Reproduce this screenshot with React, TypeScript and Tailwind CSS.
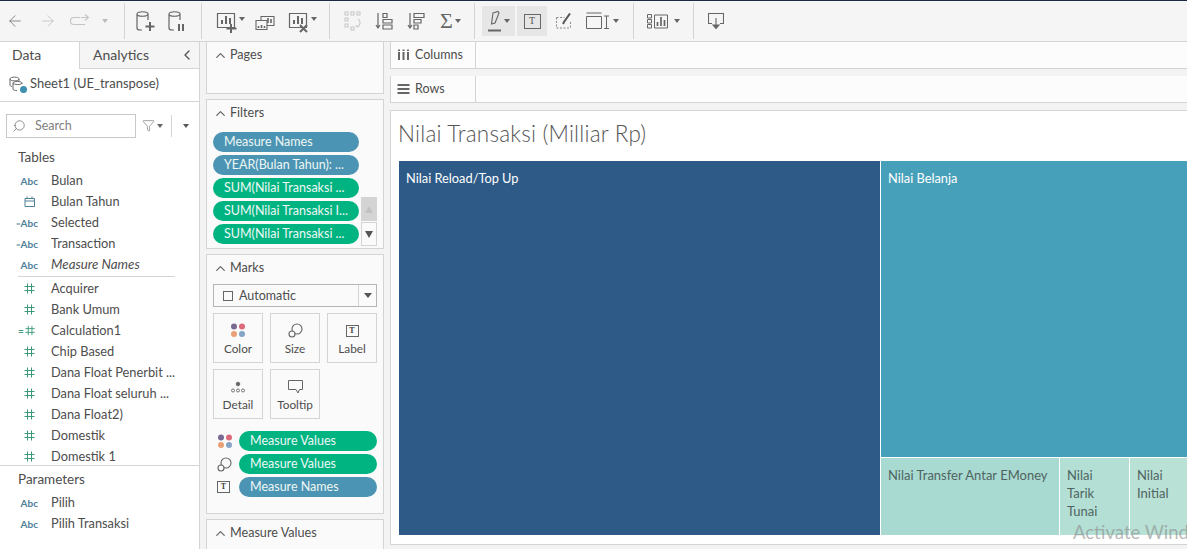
import React from 'react';
import { ArrowLeft, ArrowRight, ChevronLeft, ChevronUp, Search, Filter } from 'lucide-react';

const Caret = ({ className = 'border-t-[#666]' }: { className?: string }) => (
  <span className={`inline-block w-0 h-0 border-x-[3.5px] border-x-transparent border-t-[4px] ${className}`} />
);

const Sep = () => <div className="w-px h-9 bg-[#d4d4d4] shrink-0" />;

const Db = ({ badge }: { badge: 'plus' | 'pause' }) => (
  <svg width="22" height="24" viewBox="0 0 22 24" fill="none" stroke="#666" strokeWidth="1.2">
    <path d="M2 5v14c0 1 1 2 3 2h2M13 5v6M2 5c0-3 11-3 11 0s-11 3-11 0z" />
    {badge === 'plus' ? (
      <path d="M15 13v9M10.5 17.5h9" strokeWidth="2" />
    ) : (
      <path d="M12 15v7M16 15v7" strokeWidth="2" />
    )}
  </svg>
);

const Bars = ({ extra }: { extra: 'plus' | 'x' }) => (
  <svg width="26" height="24" viewBox="0 0 26 24" fill="none" stroke="#666" strokeWidth="1.2">
    <path d="M1.5 4.5h17v14h-17z" />
    <path d="M6 15v-4M10 15V7M14 15V9" strokeWidth="2" />
    {extra === 'plus' ? (
      <path d="M15 15v9M10.5 19.5h10" strokeWidth="2" />
    ) : (
      <path d="M12 16l7 7M19 16l-7 7" strokeWidth="2" />
    )}
  </svg>
);

const Toolbar = () => (
  <div className="h-[41px] flex items-center bg-[#f5f5f5] border-b border-[#d4d4d4] shrink-0">
    <div className="w-[24px] flex justify-end"><ArrowLeft size={18} strokeWidth={1} color="#666" /></div>
    <div className="w-[33px] flex justify-end"><ArrowRight size={18} strokeWidth={1} color="#bbb" /></div>
    <div className="w-[33px] flex justify-end">
      <svg width="20" height="14" viewBox="0 0 20 14" fill="none" stroke="#c4c4c4" strokeWidth="1.1">
        <path d="M10 3.5H4a3 3 0 0 0 0 7h11" />
        <path d="M11 3.5h7M15 0.5l3.5 3-3.5 3" />
      </svg>
    </div>
    <div className="w-[18px] flex justify-end"><Caret className="border-t-[#bbb]" /></div>
    <div className="w-[16px]" />
    <Sep />
    <div className="w-[10px]" />
    <Db badge="plus" />
    <div className="w-[10px]" />
    <Db badge="pause" />
    <div className="w-[12px]" />
    <Sep />
    <div className="w-[14px]" />
    <Bars extra="plus" />
    <span className="ml-[-3px] -mt-1 flex"><Caret /></span>
    <div className="w-[10px]" />
    <svg width="20" height="20" viewBox="0 0 20 20" fill="none" stroke="#666" strokeWidth="1.1">
      <path d="M6 5.5h13v9h-13z" />
      <path d="M10 12V9M13 12V7M16 12V8" strokeWidth="1.6" />
      <path d="M1 9.5h11v9H1z" fill="#f5f5f5" />
      <path d="M3.5 17v-2M6.5 17v-3M9.5 17v-2" strokeWidth="1.6" />
    </svg>
    <div className="w-[13px]" />
    <Bars extra="x" />
    <span className="ml-[-3px] -mt-1 flex"><Caret /></span>
    <div className="w-[12px]" />
    <Sep />
    <div className="w-[14px]" />
    <svg width="20" height="20" viewBox="0 0 20 20" fill="none" stroke="#c8c8c8" strokeWidth="1.1">
      <path d="M1 1h3v3H1zM7 1h3v3H7zM13 1h3v3h-3zM1 7h3v3H1zM1 13h3v3H1zM7 16h3v3H7z" />
      <path d="M14 8c3 2 3 6-1 8l-1-2" />
    </svg>
    <div className="w-[11px]" />
    <svg width="18" height="20" viewBox="0 0 18 20" fill="none" stroke="#666" strokeWidth="1.2">
      <path d="M3 2v15M1 14l2 3 2-3M8 2.5h4v4H8zM8 8.5h9v3.5H8zM8 14h9v4H8z" />
    </svg>
    <div className="w-[14px]" />
    <svg width="18" height="20" viewBox="0 0 18 20" fill="none" stroke="#666" strokeWidth="1.2">
      <path d="M3 2v15M1 14l2 3 2-3M7 2.5h10v4H7zM7 8.5h7v3.5H7zM7 14h4v4H7z" />
    </svg>
    <div className="w-[12px]" />
    <span className="w-[26px] ml-[3px] flex items-center text-[#666] text-[22px] leading-none font-['Liberation_Serif',serif]">
      Σ<span className="ml-[2px] flex"><Caret /></span>
    </span>
    <div className="w-[8px]" />
    <Sep />
    <div className="w-[7px]" />
    <div className="w-[33px] h-[30px] bg-[#e6e6e6] flex items-center justify-center gap-[1px]">
      <svg width="16" height="22" viewBox="0 0 16 22" fill="none" stroke="#666" strokeWidth="1.1">
        <path d="M6 3l5-1.500 1 1.500-4 10-3.500 1z" />
        <path d="M1 20.500h13" strokeWidth="2" />
      </svg>
      <Caret />
    </div>
    <div className="w-[2px]" />
    <div className="w-[30px] h-[30px] bg-[#e6e6e6] flex items-center justify-center">
      <span className="w-[17px] h-[15px] border border-[#666] flex items-center justify-center text-[10px] leading-none text-[#555] font-['Liberation_Serif',serif]">T</span>
    </div>
    <div className="w-[9px]" />
    <svg width="16" height="16" viewBox="0 0 16 16" fill="none" stroke="#888" strokeWidth="1">
      <path d="M.5 4.500h8M.5 15h14M.5 4.500V15M14.500 9v6" strokeDasharray="2 1.500" />
      <path d="M14 .5L8 9l-1 2" stroke="#555" strokeWidth="2" />
    </svg>
    <div className="w-[14px]" />
    <svg width="24" height="18" viewBox="0 0 24 18" fill="none" stroke="#666" strokeWidth="1">
      <path d="M.5 1h15M.5 4.500h15v12H.5zM18 4h5M20.500 4v12.500M18 16.500h5" />
    </svg>
    <span className="ml-[3px] flex"><Caret /></span>
    <div className="w-[14px]" />
    <Sep />
    <div className="w-[13px]" />
    <svg width="21" height="15" viewBox="0 0 21 15" fill="none" stroke="#666" strokeWidth="1">
      <path d="M.5 .5h4v3.500h-4zM.5 5.500h4V9h-4zM.5 10.500h4V14h-4zM7.500 1h13v13h-13z" />
      <path d="M10.500 12V8M14 12V3M17.500 12V6" strokeWidth="1.700" />
    </svg>
    <span className="ml-[6px] flex"><Caret /></span>
    <div className="w-[13px]" />
    <Sep />
    <div className="w-[14px]" />
    <svg width="16" height="16" viewBox="0 0 16 16" fill="none" stroke="#666" strokeWidth="1.1">
      <path d="M4 10.500H.5V.5h15v10H12" />
      <path d="M8 5v8" />
      <path d="M5 12h6l-3 3.500z" fill="#666" />
    </svg>
  </div>
);

const FieldIcon = ({ kind }: { kind: string }) => {
  if (kind === 'abc' || kind === 'calcAbc') {
    return (
      <span className="w-[20px] flex justify-end items-center text-[10px] font-bold leading-none text-[#4f8099]">
        {kind === 'calcAbc' && <span className="text-[8px]">=</span>}
        Abc
      </span>
    );
  }
  if (kind === 'date') {
    return (
      <span className="w-[20px] flex justify-end pr-[3px]">
        <svg width="11" height="11" viewBox="0 0 11 11" fill="none" stroke="#4f8099" strokeWidth="1">
          <path d="M1 2.500h9.500V10.500H1zM1 5h9.500M3 .5v2M8 .5v2" />
        </svg>
      </span>
    );
  }
  return (
    <span className="w-[20px] flex justify-end items-center pr-[3px]">
      {kind === 'calcNum' && <span className="text-[10px] font-bold leading-none text-[#3c9a78] mr-[1px]">=</span>}
      <svg width="11" height="11" viewBox="0 0 11 11" fill="none" stroke="#3c9a78" strokeWidth="1">
        <path d="M3.500 .5v10M7.500 .5v10M.5 3.500h10M.5 7.500h10" />
      </svg>
    </span>
  );
};

const Field = ({ kind, name, italic }: { kind: string; name: string; italic?: boolean }) => (
  <div className="h-[21px] flex items-center pl-[18px] shrink-0">
    <FieldIcon kind={kind} />
    <span className={`ml-[13px] text-[#4d4d4d] whitespace-nowrap ${italic ? 'italic text-[13.300px]' : 'text-[12.800px]'}`}>{name}</span>
  </div>
);

const DataPanel = () => (
  <div className="w-[200px] shrink-0 bg-white border-r border-[#d4d4d4] flex flex-col overflow-hidden">
    <div className="h-[27px] flex shrink-0">
      <div className="w-[80px] border-r border-[#d4d4d4] pl-[12px] pb-[2px] flex items-center text-[14px] text-[#4d4d4d]">Data</div>
      <div className="flex-1 bg-[#f5f5f5] border-b border-[#d4d4d4] pl-[13px] pr-[4px] pb-[1px] flex items-center justify-between text-[14px] text-[#4d4d4d]">
        Analytics
        <ChevronLeft size={16} strokeWidth={2} color="#555" />
      </div>
    </div>
    <div className="h-[33px] flex items-center pl-[9px] pb-[2px] border-b border-[#d4d4d4] shrink-0">
      <span className="relative w-[16px] h-[16px]">
        <svg width="16" height="16" viewBox="0 0 16 16" fill="none" stroke="#666" strokeWidth="1">
          <path d="M1 3c0-2.500 9-2.500 9 0s-9 2.500-9 0zM1 3v6c0 1 1 1.500 2 1.500M10 3v2" />
          <path d="M4 7c0-2 9-2 9 0s-9 2-9 0zM4 7v6c0 1 2 1.500 4 1.500M13 7v1" />
        </svg>
        <span className="absolute right-[-2px] bottom-[-1px] w-[7px] h-[7px] rounded-full bg-[#3f8fb0]" />
      </span>
      <span className="ml-[5px] text-[13px] text-[#4d4d4d]">Sheet1 (UE_transpose)</span>
    </div>
    <div className="h-[50px] flex items-center pl-[6px] pb-[3px] shrink-0">
      <div className="w-[130px] h-[24px] border border-[#c8c8c8] flex items-center pl-[5px]">
        <Search size={14} strokeWidth={1.200} color="#666" className="-scale-x-100" />
        <span className="ml-[9px] mt-[2px] text-[12.500px] text-[#808080]">Search</span>
      </div>
      <Filter size={13} strokeWidth={1.100} color="#666" className="ml-[6px]" />
      <span className="ml-[2px] flex"><Caret /></span>
      <div className="w-px h-[22px] bg-[#d4d4d4] ml-[8px]" />
      <span className="ml-[11px] flex"><Caret className="border-t-[#555]" /></span>
    </div>
    <div className="pl-[18px] text-[13.500px] text-[#4d4d4d] h-[19px] -mt-[4px] mb-[3px] leading-[19px] shrink-0">Tables</div>
    <Field kind="abc" name="Bulan" />
    <Field kind="date" name="Bulan Tahun" />
    <Field kind="calcAbc" name="Selected" />
    <Field kind="calcAbc" name="Transaction" />
    <Field kind="abc" name="Measure Names" italic />
    <div className="h-px bg-[#d4d4d4] ml-[18px] mr-[24px] my-[1px] shrink-0" />
    <Field kind="num" name="Acquirer" />
    <Field kind="num" name="Bank Umum" />
    <Field kind="calcNum" name="Calculation1" />
    <Field kind="num" name="Chip Based" />
    <Field kind="num" name="Dana Float Penerbit ..." />
    <Field kind="num" name="Dana Float seluruh ..." />
    <Field kind="num" name="Dana Float2)" />
    <Field kind="num" name="Domestik" />
    <Field kind="num" name="Domestik 1" />
    <div className="h-px bg-[#d4d4d4] -mt-[2px] shrink-0" />
    <div className="pl-[18px] text-[13.500px] text-[#4d4d4d] h-[19px] mt-[4px] mb-[3px] leading-[19px] shrink-0">Parameters</div>
    <Field kind="abc" name="Pilih" />
    <Field kind="abc" name="Pilih Transaksi" />
  </div>
);

const Card = ({ title, className, children }: { title: string; className: string; children?: React.ReactNode }) => (
  <div className={`bg-[#fafafa] border border-[#d4d4d4] shrink-0 ${className}`}>
    <div className="h-[26px] flex items-center pl-[6px]">
      <ChevronUp size={15} strokeWidth={2} color="#666" />
      <span className="ml-[2px] text-[12.600px] text-[#4d4d4d]">{title}</span>
    </div>
    {children}
  </div>
);

const Pill = ({ label, color, className = 'w-[146px]' }: { label: string; color: string; className?: string }) => (
  <div className={`h-[20px] rounded-full flex items-center pl-[11px] pt-[1px] text-[12.500px] text-[#eef7f5] whitespace-nowrap ${color} ${className}`}>
    {label}
  </div>
);

const Dots = () => (
  <svg width="16" height="15" viewBox="0 0 16 15">
    <circle cx="4" cy="3.500" r="3" fill="#7a6a93" />
    <circle cx="12" cy="3.500" r="3" fill="#dd6a7a" />
    <circle cx="4" cy="11" r="3" fill="#e9a077" />
    <circle cx="12" cy="11" r="3" fill="#84a3c7" />
  </svg>
);

const SizeIcon = () => (
  <svg width="15" height="15" viewBox="0 0 15 15" fill="none" stroke="#666" strokeWidth="1.100">
    <circle cx="9" cy="6" r="5" />
    <circle cx="4" cy="11" r="3" fill="#fafafa" />
  </svg>
);

const TBox = () => (
  <span className="w-[13px] h-[12px] border border-[#666] flex items-center justify-center text-[8px] leading-none text-[#444] font-['Liberation_Serif',serif] font-bold">T</span>
);

const MarkBtn = ({ label, children }: { label: string; children: React.ReactNode }) => (
  <div className="w-[50px] h-[50px] border border-[#d4d4d4] flex flex-col items-center pt-[9px]">
    <div className="h-[15px] flex items-center justify-center">{children}</div>
    <span className="mt-[2px] text-[11.800px] leading-[18px] text-[#4d4d4d]">{label}</span>
  </div>
);

const ShelfPanel = () => (
  <div className="w-[190px] shrink-0 pl-[6px] flex flex-col gap-[5px] overflow-hidden">
    <Card title="Pages" className="w-[178px] h-[52px] border-t-0" />
    <Card title="Filters" className="w-[178px] h-[150px]">
      <div className="flex pl-[6px] pt-[6px]">
        <div className="flex flex-col gap-[3px]">
          <Pill label="Measure Names" color="bg-[#4c94b3]" />
          <Pill label="YEAR(Bulan Tahun): ..." color="bg-[#4c94b3]" />
          <Pill label="SUM(Nilai Transaksi ..." color="bg-[#00b482]" />
          <Pill label="SUM(Nilai Transaksi I..." color="bg-[#00b482]" />
          <Pill label="SUM(Nilai Transaksi ..." color="bg-[#00b482]" />
        </div>
        <div className="ml-[2px] mt-[65px] w-[16px] flex flex-col gap-[1px]">
          <div className="h-[24px] bg-[#d4d4d4] flex items-center justify-center">
            <span className="w-0 h-0 border-x-[4px] border-x-transparent border-b-[7px] border-b-[#c2c2c2]" />
          </div>
          <div className="h-[24px] border border-[#d4d4d4] flex items-center justify-center">
            <span className="w-0 h-0 border-x-[4px] border-x-transparent border-t-[7px] border-t-[#555]" />
          </div>
        </div>
      </div>
    </Card>
    <Card title="Marks" className="w-[178px] h-[260px]">
      <div className="px-[6px] pt-[3px]">
        <div className="h-[23px] w-[164px] border border-[#b5b5b5] flex items-center pl-[9px]">
          <span className="w-[10px] h-[10px] border border-[#666]" />
          <span className="ml-[6px] mt-px flex-1 text-[12.500px] text-[#4d4d4d]">Automatic</span>
          <span className="w-[18px] h-full border-l border-[#d4d4d4] flex items-center justify-center">
            <span className="w-0 h-0 border-x-[4px] border-x-transparent border-t-[5px] border-t-[#555]" />
          </span>
        </div>
        <div className="grid grid-cols-[50px_50px_50px] gap-x-[7px] gap-y-[6px] mt-[6px]">
          <MarkBtn label="Color"><Dots /></MarkBtn>
          <MarkBtn label="Size"><SizeIcon /></MarkBtn>
          <MarkBtn label="Label"><TBox /></MarkBtn>
          <MarkBtn label="Detail">
            <svg width="14" height="12" viewBox="0 0 14 12" fill="none" stroke="#666" strokeWidth="0.900">
              <circle cx="7" cy="3" r="1.800" fill="#666" />
              <circle cx="2" cy="9.500" r="1.500" />
              <circle cx="7" cy="9.500" r="1.500" />
              <circle cx="12" cy="9.500" r="1.500" />
            </svg>
          </MarkBtn>
          <MarkBtn label="Tooltip">
            <svg width="15" height="14" viewBox="0 0 15 14" fill="none" stroke="#666" strokeWidth="1">
              <path d="M.5 .5h14v9h-3l-1.500 3.500-2-3.500H.5z" />
            </svg>
          </MarkBtn>
        </div>
        <div className="mt-[12px] flex flex-col gap-[3px]">
          <div className="flex items-center">
            <span className="w-[26px] flex pl-[4px]"><Dots /></span>
            <Pill label="Measure Values" color="bg-[#00b482]" className="w-[138px]" />
          </div>
          <div className="flex items-center">
            <span className="w-[26px] flex pl-[4px]"><SizeIcon /></span>
            <Pill label="Measure Values" color="bg-[#00b482]" className="w-[138px]" />
          </div>
          <div className="flex items-center">
            <span className="w-[26px] flex pl-[4px]"><TBox /></span>
            <Pill label="Measure Names" color="bg-[#4c94b3]" className="w-[138px]" />
          </div>
        </div>
      </div>
    </Card>
    <Card title="Measure Values" className="w-[178px] h-[60px]" />
  </div>
);

const Shelf = ({ label, icon }: { label: string; icon: React.ReactNode }) => (
  <div className="h-[27px] flex bg-[#fcfcfc] border-b border-[#d4d4d4] border-l shrink-0">
    <div className="w-[85px] border-r border-[#d4d4d4] flex items-center pl-[6px] text-[12.500px] text-[#4d4d4d]">
      <span className="w-[14px] flex">{icon}</span>
      <span className="ml-[4px]">{label}</span>
    </div>
  </div>
);

const Canvas = () => (
  <div className="flex-1 min-w-0 flex flex-col">
    <Shelf
      label="Columns"
      icon={
        <svg width="13" height="12" viewBox="0 0 13 12" fill="#666">
          <path d="M1 3h2v8H1zM5.500 3h2v8h-2zM10 3h2v8h-2zM1 .5h2v1.500H1zM5.500 .5h2v1.500h-2zM10 .5h2v1.500h-2z" />
        </svg>
      }
    />
    <div className="h-[7px] shrink-0" />
    <Shelf
      label="Rows"
      icon={
        <svg width="13" height="12" viewBox="0 0 13 12" fill="#666">
          <path d="M.5 1h12v2H.5zM.5 5h12v2H.5zM.5 9h12v2H.5z" />
        </svg>
      }
    />
    <div className="h-[7px] shrink-0" />
    <div className="h-[435px] bg-white border border-[#d4d4d4] border-r-0 flex flex-col pl-[8px] shrink-0 overflow-hidden">
      <div className="h-[50px] flex items-center shrink-0 pb-[5px] -ml-px text-[22.500px] font-light text-[#555] tracking-[0.2px]">
        Nilai Transaksi (Milliar Rp)
      </div>
      <div className="flex h-[374px] shrink-0">
        <div className="w-[481px] shrink-0 bg-[#2e5a87] text-white text-[12.800px] px-[7px] pt-[8px]">Nilai Reload/Top Up</div>
        <div className="flex-1 min-w-0 ml-px flex flex-col gap-px">
          <div className="h-[296px] shrink-0 bg-[#47a0b9] text-white text-[12.800px] px-[7px] pt-[8px]">Nilai Belanja</div>
          <div className="flex-1 flex gap-px text-[13px] leading-[18px] text-[#4f6461]">
            <div className="w-[178px] shrink-0 bg-[#a9dad2] px-[7px] pt-[8px] whitespace-nowrap">Nilai Transfer Antar EMoney</div>
            <div className="w-[69px] shrink-0 bg-[#b3dfd5] px-[7px] pt-[8px]">Nilai<br />Tarik<br />Tunai</div>
            <div className="flex-1 bg-[#b9e1d6] px-[7px] pt-[8px]">Nilai<br />Initial</div>
          </div>
        </div>
      </div>
    </div>
  </div>
);

export default function App() {
  return (
    <div className="relative w-[1187px] h-[549px] overflow-hidden bg-[#f3f3f3] flex flex-col font-['Lato','Open_Sans',sans-serif] border-t border-[#1d2a44]">
      <Toolbar />
      <div className="flex flex-1 min-h-0">
        <DataPanel />
        <ShelfPanel />
        <Canvas />
      </div>
      <div className="absolute left-[1073px] top-[518px] text-[18.500px] leading-[26px] text-[#8a8a8a]/60 whitespace-nowrap">Activate Windows</div>
    </div>
  );
}
